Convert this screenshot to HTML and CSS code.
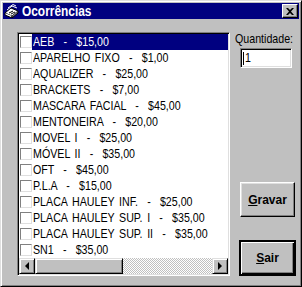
FILE: index.html
```html
<!DOCTYPE html>
<html>
<head>
<meta charset="utf-8">
<link rel="stylesheet" href="styles.css">
</head>
<body>
<div class="win">
  <div class="title">
    <svg class="icon" width="15" height="14" viewBox="0 0 15 14">
      <path d="M1 9 L7 4 L14 7 L8 12 Z" fill="#fff" stroke="#000" stroke-width="1"/>
      <path d="M1 9 L1 11 L8 14 L8 12" fill="#fff" stroke="#000" stroke-width="1"/>
      <path d="M8 12 L8 14 L14 9 L14 7" fill="#808080" stroke="#000" stroke-width="1"/>
      <path d="M3 6 L8 2 L13 4" fill="none" stroke="#fff" stroke-width="1"/>
      <path d="M4 4 L9 0.5 L12 2" fill="none" stroke="#fff" stroke-width="1"/>
      <path d="M5 9 L9 7 M7 10 L11 8" stroke="#000" stroke-width="1"/>
    </svg>
    <span class="title-text"><span class="nar-b">Ocorrências</span></span>
    <span class="close">
      <svg width="8" height="7" viewBox="0 0 8 7"><path d="M0 0h2l2 2 2-2h2L5 3.5 8 7H6L4 5 2 7H0l3-3.5z" fill="#000"/></svg>
    </span>
  </div>
  <div class="content">
    <div class="list">
      <div class="items">
        <div class="row sel"><span class="cb"></span><span class="lbl"><span class="nar">AEB  -  $15,00</span></span></div>
        <div class="row"><span class="cb"></span><span class="lbl"><span class="nar">APARELHO FIXO  -  $1,00</span></span></div>
        <div class="row"><span class="cb"></span><span class="lbl"><span class="nar">AQUALIZER  -  $25,00</span></span></div>
        <div class="row"><span class="cb"></span><span class="lbl"><span class="nar">BRACKETS  -  $7,00</span></span></div>
        <div class="row"><span class="cb"></span><span class="lbl"><span class="nar">MASCARA FACIAL  -  $45,00</span></span></div>
        <div class="row"><span class="cb"></span><span class="lbl"><span class="nar">MENTONEIRA  -  $20,00</span></span></div>
        <div class="row"><span class="cb"></span><span class="lbl"><span class="nar">MOVEL I  -  $25,00</span></span></div>
        <div class="row"><span class="cb"></span><span class="lbl"><span class="nar">MÓVEL II  -  $35,00</span></span></div>
        <div class="row"><span class="cb"></span><span class="lbl"><span class="nar">OFT  -  $45,00</span></span></div>
        <div class="row"><span class="cb"></span><span class="lbl"><span class="nar">P.L.A  -  $15,00</span></span></div>
        <div class="row"><span class="cb"></span><span class="lbl"><span class="nar">PLACA HAULEY INF.  -  $25,00</span></span></div>
        <div class="row"><span class="cb"></span><span class="lbl"><span class="nar">PLACA HAULEY SUP. I  -  $35,00</span></span></div>
        <div class="row"><span class="cb"></span><span class="lbl"><span class="nar">PLACA HAULEY SUP. II  -  $35,00</span></span></div>
        <div class="row"><span class="cb"></span><span class="lbl"><span class="nar">SN1  -  $35,00</span></span></div>
      </div>
      <div class="hscroll">
        <span class="sbtn"><span class="arr-l"></span></span>
        <span class="thumb"></span>
        <span class="track"></span>
        <span class="sbtn"><span class="arr-r"></span></span>
      </div>
    </div>
    <div class="side">
      <div class="qlabel"><span class="nar">Quantidade:</span></div>
      <div class="input"><span class="caret"></span><span class="nar">1</span></div>
      <div class="btn gravar"><span><u>G</u>ravar</span></div>
      <div class="btn sair"><span><u>S</u>air</span></div>
    </div>
  </div>
</div>
</body>
</html>
```
FILE: styles.css
```css
html, body { margin: 0; padding: 0; background: #c0c0c0; }
body { font-family: "Liberation Sans", Arial, sans-serif; font-size: 13px; }
.nar { display: inline-block; transform: scaleX(0.82); transform-origin: 0 50%; white-space: pre; }
.lbl .nar { word-spacing: 2px; }
.nar-b { display: inline-block; transform: scaleX(0.85); transform-origin: 0 50%; white-space: pre; }
.win {
  width: 302px; height: 287px; box-sizing: border-box;
  background: #c0c0c0;
  border: 1px solid; border-color: #dfdfdf #000 #000 #dfdfdf;
  box-shadow: inset 1px 1px #fff, inset -1px -1px #808080;
  padding: 2px;
  display: flex; flex-direction: column;
}
.title {
  height: 16px; background: #000080; color: #fff;
  display: flex; align-items: center; flex: none;
}
.icon { margin-left: 1px; margin-right: 3px; flex: none; }
.title-text { font-weight: bold; font-size: 14px; line-height: 16px; flex: 1; }
.close {
  width: 16px; height: 14px; box-sizing: border-box; margin-right: 1px;
  background: #c0c0c0;
  border: 1px solid; border-color: #fff #000 #000 #fff;
  box-shadow: inset -1px -1px #808080;
  display: flex; align-items: center; justify-content: center;
}
.content { flex: 1; display: flex; }
.list {
  margin: 13px 0 0 14px; width: 213px; height: 244px; box-sizing: border-box;
  border: 1px solid; border-color: #808080 #fff #fff #808080;
  box-shadow: inset 1px 1px #000, inset -1px -1px #dfdfdf;
  padding: 1px; background: #fff;
  display: flex; flex-direction: column;
}
.items { height: 224px; }
.row { height: 16px; display: flex; align-items: center; }
.cb {
  width: 12px; height: 12px; box-sizing: border-box; margin-left: 1px; flex: none;
  border: 1px solid; border-color: #808080 #dfdfdf #dfdfdf #808080; background: #fff;
}
.lbl { flex: 1; height: 16px; line-height: 16px; padding-left: 1px; }
.sel .lbl { background: #000080; color: #fff; }
.hscroll { height: 16px; display: flex; }
.sbtn, .thumb {
  box-sizing: border-box; height: 16px; background: #c0c0c0;
  border: 1px solid; border-color: #dfdfdf #000 #000 #dfdfdf;
  box-shadow: inset 1px 1px #fff, inset -1px -1px #808080;
}
.sbtn { width: 16px; display: flex; align-items: center; justify-content: center; }
.thumb { width: 88px; }
.track { flex: 1; background: repeating-conic-gradient(#c0c0c0 0 25%, #fff 0 50%) 0 0 / 2px 2px; }
.arr-l { width: 0; height: 0; border-style: solid; border-width: 4px 4px 4px 0; border-color: transparent #000 transparent transparent; }
.arr-r { width: 0; height: 0; border-style: solid; border-width: 4px 0 4px 4px; border-color: transparent transparent transparent #000; }
.side { display: flex; flex-direction: column; margin-left: 5px; }
.qlabel { margin-top: 13px; line-height: 14px; }
.input {
  margin: 2px 0 0 5px; width: 52px; height: 20px; box-sizing: border-box;
  border: 1px solid; border-color: #808080 #fff #fff #808080;
  box-shadow: inset 1px 1px #000, inset -1px -1px #dfdfdf;
  background: #fff; line-height: 16px; padding: 1px 2px;
  display: flex; align-items: center;
}
.caret { width: 1px; height: 13px; background: #000; margin-right: 1px; }
.btn {
  box-sizing: border-box; background: #c0c0c0;
  border: 1px solid; border-color: #fff #000 #000 #fff;
  box-shadow: inset -1px -1px #808080, inset 1px 1px #dfdfdf;
  display: flex; align-items: center; justify-content: center;
  font-weight: bold; font-size: 12px;
}
.gravar { margin: 114px 0 0 5px; width: 55px; height: 35px; }
.sair {
  margin: 23px 0 0 4px; width: 57px; height: 36px;
  border: 2px solid #000;
  box-shadow: inset 1px 1px #fff, inset -1px -1px #000, inset -2px -2px #808080;
}
```
